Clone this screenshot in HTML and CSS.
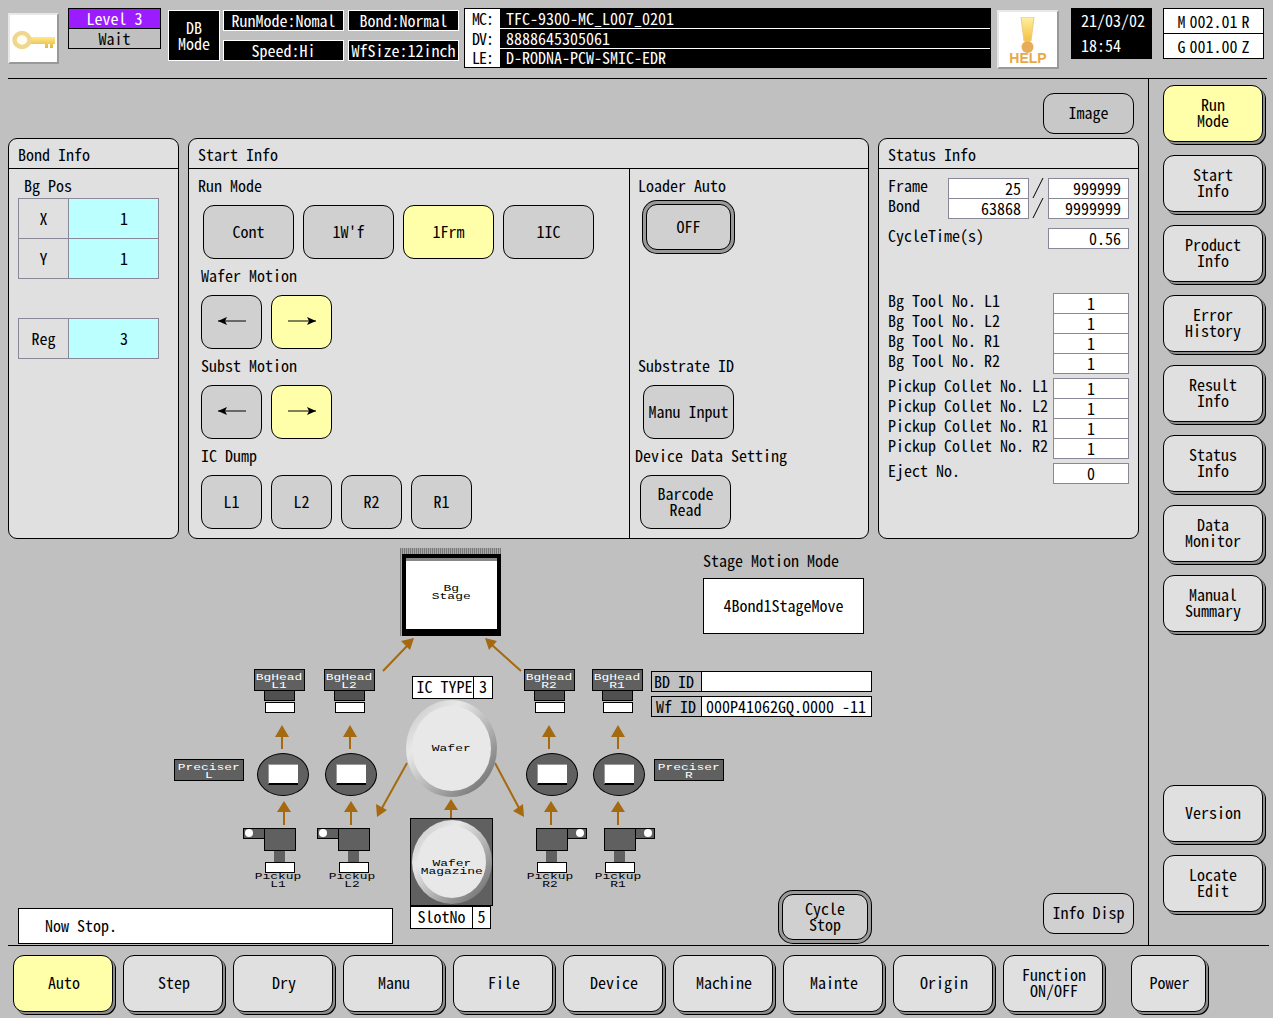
FILE: index.html
```html
<!DOCTYPE html>
<html lang="en">
<head>
  <meta charset="UTF-8" />
  <title>TFC-9300 Auto</title>
  <link rel="stylesheet" href="styles.css">
</head>
<body>
  <div class="screen">
    <header class="top">
      <div class="tile key-tile">
        <svg width="44" height="26" viewBox="0 0 44 26">
          <defs>
            <linearGradient id="gold" x1="0" y1="0" x2="0" y2="1">
              <stop offset="0" stop-color="#ffe98a"/>
              <stop offset="1" stop-color="#e3b63c"/>
            </linearGradient>
          </defs>
          <path d="M17 11h26v7h-2v4h-3v-4h-2v4h-3v-4h-16z" fill="url(#gold)"/>
          <ellipse cx="10" cy="14" rx="7.5" ry="7" fill="#fffdf0" stroke="#efd78f" stroke-width="4.5"/>
        </svg>
      </div>
      <div class="level">
        <div class="level-on">Level 3</div>
        <div class="level-off">Wait</div>
      </div>
      <div class="black-box db-mode">DB<br>Mode</div>
      <div class="mode-grid">
        <div class="black-box">RunMode:Nomal</div>
        <div class="black-box">Bond:Normal</div>
        <div class="black-box">Speed:Hi</div>
        <div class="black-box">WfSize:12inch</div>
      </div>
      <div class="names">
        <div class="name-row"><span class="name-key">MC:</span><span class="name-val">TFC-9300-MC_L007_0201</span></div>
        <div class="name-row"><span class="name-key">DV:</span><span class="name-val">8888645305061</span></div>
        <div class="name-row"><span class="name-key">LE:</span><span class="name-val">D-RODNA-PCW-SMIC-EDR</span></div>
      </div>
      <div class="tile help-tile">
        <svg width="22" height="36" viewBox="0 0 22 36">
          <defs>
            <linearGradient id="warn" x1="0" y1="0" x2="0" y2="1">
              <stop offset="0" stop-color="#fff0a0"/>
              <stop offset="1" stop-color="#f5c040"/>
            </linearGradient>
          </defs>
          <path d="M4 0h13l-3 24h-7z" fill="url(#warn)" stroke="#ecca80"/>
          <circle cx="10.5" cy="30" r="6" fill="#e8ac58"/>
        </svg>
        <span class="help-text">HELP</span>
      </div>
      <div class="clock">21/03/02<br>18:54</div>
      <div class="pos">
        <div class="pos-row">M 002.01 R</div>
        <div class="pos-row">G 001.00 Z</div>
      </div>
    </header>

    <div class="middle">
      <main class="work">
        <div class="image-row"><button class="btn flat wide">Image</button></div>

        <div class="panels">
          <section class="panel bond-panel">
            <h2>Bond Info</h2>
            <div class="bond-body">
              <div class="bg-pos">Bg Pos</div>
              <div class="pair"><span class="pair-key">X</span><span class="pair-val">1</span></div>
              <div class="pair"><span class="pair-key">Y</span><span class="pair-val">1</span></div>
              <div class="pair reg"><span class="pair-key">Reg</span><span class="pair-val">3</span></div>
            </div>
          </section>

          <section class="panel start-panel">
            <h2>Start Info</h2>
            <div class="start-body">
              <div class="start-left">
                <div class="label run-label">Run Mode</div>
                <div class="btn-row run-row">
                  <button class="btn flat wide">Cont</button>
                  <button class="btn flat wide">1W'f</button>
                  <button class="btn flat wide on">1Frm</button>
                  <button class="btn flat wide">1IC</button>
                </div>
                <div class="label">Wafer Motion</div>
                <div class="btn-row">
                  <button class="btn flat small"><svg width="30" height="12" viewBox="0 0 30 12"><path d="M1 6h28" stroke="#000"/><path d="M1 6l9-4-2 4 2 4z"/></svg></button>
                  <button class="btn flat small on"><svg width="30" height="12" viewBox="0 0 30 12"><path d="M1 6h28" stroke="#000"/><path d="M29 6l-9-4 2 4-2 4z"/></svg></button>
                </div>
                <div class="label">Subst Motion</div>
                <div class="btn-row">
                  <button class="btn flat small"><svg width="30" height="12" viewBox="0 0 30 12"><path d="M1 6h28" stroke="#000"/><path d="M1 6l9-4-2 4 2 4z"/></svg></button>
                  <button class="btn flat small on"><svg width="30" height="12" viewBox="0 0 30 12"><path d="M1 6h28" stroke="#000"/><path d="M29 6l-9-4 2 4-2 4z"/></svg></button>
                </div>
                <div class="label">IC Dump</div>
                <div class="btn-row">
                  <button class="btn flat small">L1</button>
                  <button class="btn flat small">L2</button>
                  <button class="btn flat small">R2</button>
                  <button class="btn flat small">R1</button>
                </div>
              </div>
              <div class="start-right">
                <div class="label">Loader Auto</div>
                <button class="btn flat ringed off-btn">OFF</button>
                <div class="label substrate">Substrate ID</div>
                <button class="btn flat wide manu-btn">Manu Input</button>
                <div class="label device">Device Data Setting</div>
                <button class="btn flat wide barcode-btn">Barcode<br>Read</button>
              </div>
            </div>
          </section>

          <section class="panel status-panel">
            <h2>Status Info</h2>
            <div class="status-body">
              <div class="stat">
                <span class="stat-name frame-name">Frame</span>
                <span class="num">25</span>
                <svg class="slash" width="19" height="20" viewBox="0 0 19 20"><path d="M4 20L14 0" stroke="#000" fill="none"/></svg>
                <span class="num">999999</span>
              </div>
              <div class="stat">
                <span class="stat-name frame-name">Bond</span>
                <span class="num">63868</span>
                <svg class="slash" width="19" height="20" viewBox="0 0 19 20"><path d="M4 20L14 0" stroke="#000" fill="none"/></svg>
                <span class="num">9999999</span>
              </div>
              <div class="stat cycle">
                <span class="stat-name">CycleTime(s)</span>
                <span class="num">0.56</span>
              </div>
              <div class="tools first-tools">
                <div class="stat"><span class="stat-name">Bg Tool No. L1</span><span class="num mid">1</span></div>
                <div class="stat"><span class="stat-name">Bg Tool No. L2</span><span class="num mid">1</span></div>
                <div class="stat"><span class="stat-name">Bg Tool No. R1</span><span class="num mid">1</span></div>
                <div class="stat"><span class="stat-name">Bg Tool No. R2</span><span class="num mid">1</span></div>
              </div>
              <div class="tools">
                <div class="stat"><span class="stat-name">Pickup Collet No. L1</span><span class="num mid">1</span></div>
                <div class="stat"><span class="stat-name">Pickup Collet No. L2</span><span class="num mid">1</span></div>
                <div class="stat"><span class="stat-name">Pickup Collet No. R1</span><span class="num mid">1</span></div>
                <div class="stat"><span class="stat-name">Pickup Collet No. R2</span><span class="num mid">1</span></div>
              </div>
              <div class="tools">
                <div class="stat"><span class="stat-name">Eject No.</span><span class="num mid">0</span></div>
              </div>
            </div>
          </section>
        </div>

        <!-- machine diagram, coordinates are relative to this canvas (top = y 540) -->
        <div class="canvas">
          <svg class="arrows" width="1148" height="405" viewBox="0 540 1148 405">
            <g stroke="#a5690f" stroke-width="2" fill="none">
              <path d="M282 749V734M350 749V734M549 749V734M618 749V734"/>
              <path d="M284 825V810M351 825V810M551 825V810M618 825V810M451 820V808"/>
              <path d="M383 671L407 646M521 671L492 645M407 763L382 808M495 763L519 808"/>
            </g>
            <g fill="#a5690f">
              <path d="M275 737l7-12 7 12zM343 737l7-12 7 12zM542 737l7-12 7 12zM611 737l7-12 7 12z"/>
              <path d="M277 812l7-11 7 11zM344 812l7-11 7 11zM544 812l7-11 7 11zM611 812l7-11 7 11zM444 810l7-11 7 11z"/>
              <path d="M414 638l-13 3 9 9zM485 638l4 12 8-9zM377 817l-1-13 11 6zM524 817l-11-6 10-7z"/>
            </g>
          </svg>

          <div class="stage">
            <div class="stage-face"><span class="tiny">Bg<br>Stage</span></div>
          </div>

          <div class="motion-label">Stage Motion Mode</div>
          <div class="motion-box">4Bond1StageMove</div>

          <div class="head head-l1"><div class="dark-label"><span class="tiny">BgHead<br>L1</span></div><div class="head-neck"></div><div class="white-foot"></div></div>
          <div class="head head-l2"><div class="dark-label"><span class="tiny">BgHead<br>L2</span></div><div class="head-neck"></div><div class="white-foot"></div></div>
          <div class="head head-r2"><div class="dark-label"><span class="tiny">BgHead<br>R2</span></div><div class="head-neck"></div><div class="white-foot"></div></div>
          <div class="head head-r1"><div class="dark-label"><span class="tiny">BgHead<br>R1</span></div><div class="head-neck"></div><div class="white-foot"></div></div>

          <div class="dark-label preciser preciser-l"><span class="tiny">Preciser<br>L</span></div>
          <div class="dark-label preciser preciser-r"><span class="tiny">Preciser<br>R</span></div>

          <div class="oval oval-l1"><div class="oval-face"></div></div>
          <div class="oval oval-l2"><div class="oval-face"></div></div>
          <div class="oval oval-r2"><div class="oval-face"></div></div>
          <div class="oval oval-r1"><div class="oval-face"></div></div>

          <div class="pickup pickup-l1"><div class="arm"></div><div class="body"></div><div class="stem"></div><div class="white-foot"></div><div class="pick-name"><span class="tiny">Pickup<br>L1</span></div></div>
          <div class="pickup pickup-l2"><div class="arm"></div><div class="body"></div><div class="stem"></div><div class="white-foot"></div><div class="pick-name"><span class="tiny">Pickup<br>L2</span></div></div>
          <div class="pickup right pickup-r2"><div class="arm"></div><div class="body"></div><div class="stem"></div><div class="white-foot"></div><div class="pick-name"><span class="tiny">Pickup<br>R2</span></div></div>
          <div class="pickup right pickup-r1"><div class="arm"></div><div class="body"></div><div class="stem"></div><div class="white-foot"></div><div class="pick-name"><span class="tiny">Pickup<br>R1</span></div></div>

          <div class="tag ic-type"><span class="tag-key">IC TYPE</span><span class="tag-val">3</span></div>
          <div class="disc wafer"><div class="disc-face"><span class="tiny">Wafer</span></div></div>
          <div class="magazine"></div>
          <div class="disc wafer-mag"><div class="disc-face"><span class="tiny">Wafer<br>Magazine</span></div></div>
          <div class="tag slot-no"><span class="tag-key">SlotNo</span><span class="tag-val">5</span></div>

          <div class="id-row bd-id"><span class="id-key">BD ID</span><span class="id-val"></span></div>
          <div class="id-row wf-id"><span class="id-key">Wf ID</span><span class="id-val">000P41062GQ.0000 -11</span></div>

          <div class="message">Now Stop.</div>
          <button class="btn flat ringed cycle-stop">Cycle<br>Stop</button>
          <button class="btn flat wide info-disp">Info Disp</button>
        </div>
      </main>

      <aside class="side">
        <button class="btn raised on">Run<br>Mode</button>
        <button class="btn raised">Start<br>Info</button>
        <button class="btn raised">Product<br>Info</button>
        <button class="btn raised">Error<br>History</button>
        <button class="btn raised">Result<br>Info</button>
        <button class="btn raised">Status<br>Info</button>
        <button class="btn raised">Data<br>Monitor</button>
        <button class="btn raised">Manual<br>Summary</button>
        <button class="btn raised version">Version</button>
        <button class="btn raised">Locate<br>Edit</button>
      </aside>
    </div>

    <footer class="bottom">
      <button class="btn raised on">Auto</button>
      <button class="btn raised">Step</button>
      <button class="btn raised">Dry</button>
      <button class="btn raised">Manu</button>
      <button class="btn raised">File</button>
      <button class="btn raised">Device</button>
      <button class="btn raised">Machine</button>
      <button class="btn raised">Mainte</button>
      <button class="btn raised">Origin</button>
      <button class="btn raised">Function<br>ON/OFF</button>
      <button class="btn raised power">Power</button>
    </footer>
  </div>
</body>
</html>
```

FILE: styles.css
```css
* {
  margin: 0;
  padding: 0;
  box-sizing: border-box;
}

body {
  background: #c0c0c0;
  color: #000;
  font-family: "Noto Sans CJK JP", "Liberation Mono", monospace;
  font-feature-settings: "hwid" 1;
  font-size: 16px;
  line-height: 16px;
}

.screen {
  width: 1273px;
  height: 1018px;
  overflow: hidden;
  display: flex;
  flex-direction: column;
}

/* ---- top bar ---- */
.top {
  height: 79px;
  margin: 0 6px 0 8px;
  border-bottom: 1px solid #000;
  display: flex;
  align-items: flex-start;
  white-space: nowrap;
}

.tile {
  background: #fff;
  border-top: 2px solid #e8e8e8;
  border-left: 2px solid #e8e8e8;
  border-right: 2px solid #999;
  border-bottom: 2px solid #999;
  display: flex;
  align-items: center;
  justify-content: center;
}

.key-tile {
  width: 51px;
  height: 51px;
  margin-top: 13px;
}

.level {
  width: 93px;
  height: 41px;
  margin: 8px 0 0 9px;
  border: 1px solid #000;
  text-align: center;
}

.level-on {
  height: 20px;
  line-height: 19px;
  background: #9b1cff;
  color: #fff;
  border-bottom: 1px solid #000;
}

.level-off {
  height: 19px;
  line-height: 18px;
}

.black-box {
  background: #000;
  color: #fff;
  border: 1px solid #fff;
  text-align: center;
  line-height: 18px;
}

.db-mode {
  width: 52px;
  height: 51px;
  margin: 10px 0 0 7px;
  padding-top: 8px;
  line-height: 16px;
}

.mode-grid {
  display: grid;
  grid-template-columns: 121px 111px;
  grid-template-rows: 21px 21px;
  column-gap: 4px;
  row-gap: 9px;
  margin: 10px 0 0 3px;
}

.names {
  width: 527px;
  height: 60px;
  margin: 8px 0 0 5px;
  border: 1px solid #000;
  background: #000;
}

.name-row {
  height: 20px;
  display: flex;
  line-height: 19px;
  border-bottom: 1px solid #fff;
}

.name-row:last-child {
  height: 18px;
  line-height: 17px;
  border-bottom: 0;
}

.name-key {
  width: 36px;
  background: #fff;
  color: #000;
  padding-left: 7px;
  border-right: 1px solid #000;
  letter-spacing: -1px;
}

.name-val {
  flex: 1;
  color: #fff;
  padding-left: 5px;
}

.help-tile {
  width: 62px;
  height: 59px;
  margin: 10px 0 0 6px;
  flex-direction: column;
  padding-top: 1px;
}

.help-text {
  font: bold 14px/12px "Liberation Sans", sans-serif;
  color: #e8a848;
  margin-top: -1px;
}

.clock {
  width: 81px;
  height: 51px;
  margin: 8px 0 0 12px;
  background: #000;
  color: #fff;
  padding: 0 0 0 10px;
  line-height: 25px;
  font-size: 16px;
}

.pos {
  width: 101px;
  height: 51px;
  margin: 8px 0 0 11px;
  background: #fff;
  border: 1px solid #000;
}

.pos-row {
  height: 25px;
  line-height: 25px;
  text-align: center;
  word-spacing: -4px;
}

.pos-row:first-child {
  border-bottom: 1px solid #000;
}

/* ---- buttons ---- */
.btn {
  font: inherit;
  font-feature-settings: inherit;
  color: #000;
  border: 1px solid #000;
  border-radius: 11px;
  background: #d0d0d0;
  display: flex;
  align-items: center;
  justify-content: center;
  text-align: center;
  flex: none;
  padding-bottom: 3px;
}

.btn.on {
  background: #ffffaa;
}

.btn.wide {
  width: 91px;
  height: 54px;
}

.btn.small {
  width: 61px;
  height: 54px;
}

.btn.ringed {
  box-shadow: 0 0 0 3px #999, 0 0 0 4px #000;
}

.btn.raised {
  width: 100px;
  height: 57px;
  background: #e0e0e0;
  box-shadow: 2px 2px 0 #8c8c8c, 3px 3px 0 #000;
}

.btn.raised.on {
  background: #ffffaa;
}

/* ---- middle ---- */
.middle {
  height: 867px;
  flex: none;
  display: flex;
  margin: 0 4px 0 8px;
  border-bottom: 1px solid #000;
}

.work {
  width: 1141px;
  flex: none;
  border-right: 1px solid #000;
  display: flex;
  flex-direction: column;
}

.image-row {
  height: 59px;
  padding: 14px 0 0 0;
  display: flex;
  justify-content: flex-end;
  margin-right: 14px;
}

.image-row .btn {
  height: 41px;
  background: #c8c8c8;
}

.panels {
  display: flex;
  gap: 9px;
  height: 401px;
  margin-bottom: 1px;
}

.panel {
  background: #e0e0e0;
  border: 1px solid #000;
  border-radius: 9px;
  display: flex;
  flex-direction: column;
  flex: none;
}

.panel h2 {
  font: inherit;
  font-feature-settings: inherit;
  height: 30px;
  padding: 7px 0 0 9px;
  border-bottom: 1px solid #000;
  flex: none;
}

.bond-panel {
  width: 171px;
}

.start-panel {
  width: 681px;
}

.status-panel {
  width: 261px;
}

.bond-body {
  padding: 9px 0 0 9px;
}

.bg-pos {
  height: 20px;
  padding-left: 6px;
  line-height: 14px;
}

.pair {
  width: 141px;
  height: 41px;
  margin-bottom: -1px;
  display: flex;
  border: 1px solid #889;
  line-height: 39px;
  text-align: center;
}

.pair-key {
  width: 50px;
  border-right: 1px solid #889;
}

.pair-val {
  flex: 1;
  background: #bbffff;
  padding-left: 21px;
}

.pair.reg {
  margin-top: 40px;
}

.start-body {
  display: flex;
  flex: 1;
}

.start-left {
  width: 441px;
  border-right: 1px solid #000;
  padding: 0 0 0 12px;
}

.label {
  height: 20px;
  margin-top: 7px;
  line-height: 18px;
}

.run-label {
  margin-left: -3px;
}

.btn-row {
  display: flex;
  gap: 9px;
  margin-top: 9px;
}

.run-row {
  margin-left: 2px;
}

.start-right {
  flex: 1;
  padding-left: 8px;
}

.off-btn {
  margin: 8px 0 0 8px;
  width: 85px;
  height: 46px;
}

.substrate {
  margin-top: 106px;
}

.manu-btn {
  margin: 9px 0 0 5px;
}

.device {
  margin-left: -3px;
}

.barcode-btn {
  margin: 9px 0 0 2px;
}

.status-body {
  padding: 9px 9px 0 9px;
}

.stat {
  height: 20px;
  display: flex;
  align-items: flex-start;
}

.stat-name {
  flex: 1;
  line-height: 14px;
  white-space: nowrap;
}

.frame-name {
  flex: none;
  width: 60px;
}

.num {
  width: 81px;
  height: 21px;
  flex: none;
  background: #fff;
  border: 1px solid #889;
  text-align: right;
  padding-right: 7px;
  line-height: 18px;
}

.num.mid {
  width: 76px;
  text-align: center;
  padding: 0;
}

.slash {
  flex: none;
}

.cycle {
  margin-top: 10px;
}

.tools {
  margin-top: 5px;
}

.first-tools {
  margin-top: 45px;
}

/* ---- machine diagram ---- */
.canvas {
  position: relative;
  flex: 1;
  margin-left: -8px;
}

.arrows {
  position: absolute;
  left: 0;
  top: 0;
}

.tiny {
  display: inline-block;
  font: 9.5px/8px "Liberation Mono", monospace;
  font-feature-settings: normal;
  transform: scaleX(1.36);
  white-space: nowrap;
}

.stage {
  position: absolute;
  left: 400px;
  top: 8px;
  width: 101px;
  height: 88px;
  padding: 6px 0 0 2px;
  background: repeating-linear-gradient(90deg, #777 0 1px, #aaa 1px 2px);
}

.stage-face {
  width: 99px;
  height: 82px;
  padding-bottom: 2px;
  border: 4px solid #000;
  border-bottom-width: 7px;
  background: #fff;
  box-shadow: inset 0 3px 0 #888;
  display: flex;
  align-items: center;
  justify-content: center;
  text-align: center;
}

.motion-label {
  position: absolute;
  left: 703px;
  top: 12px;
}

.motion-box {
  position: absolute;
  left: 703px;
  top: 38px;
  width: 161px;
  height: 56px;
  background: #fff;
  border: 1px solid #000;
  line-height: 52px;
  text-align: center;
}

.dark-label {
  background: #606060;
  color: #fff;
  border: 1px solid #000;
  text-align: center;
  padding-top: 3px;
}

.head {
  position: absolute;
  top: 129px;
  width: 51px;
}

.head .dark-label {
  height: 22px;
}

.head-neck {
  width: 31px;
  height: 10px;
  margin-left: 10px;
  background: #505050;
  border: 1px solid #000;
  border-top: 0;
}

.white-foot {
  width: 30px;
  height: 11px;
  margin: 1px 0 0 11px;
  background: #fff;
  border: 1px solid #000;
}

.head-l1 { left: 254px; }
.head-l2 { left: 324px; }
.head-r2 { left: 524px; }
.head-r1 { left: 592px; }

.preciser {
  position: absolute;
  top: 219px;
  width: 70px;
  height: 22px;
}

.preciser-l { left: 174px; }
.preciser-r { left: 654px; }

.oval {
  position: absolute;
  top: 213px;
  width: 52px;
  height: 43px;
  border-radius: 50%;
  background: #606060;
  border: 1px solid #000;
  padding: 10px 0 0 10px;
}

.oval-face {
  width: 30px;
  height: 21px;
  background: #fff;
  border-top: 1px solid #999;
  border-left: 1px solid #999;
  border-bottom: 2px solid #000;
}

.oval-l1 { left: 257px; }
.oval-l2 { left: 325px; }
.oval-r2 { left: 526px; }
.oval-r1 { left: 593px; }

.pickup {
  position: absolute;
  top: 288px;
  width: 32px;
}

.pickup .body {
  width: 32px;
  height: 23px;
  background: #606060;
  border: 1px solid #000;
}

.pickup .arm {
  position: absolute;
  left: -21px;
  top: 0;
  width: 21px;
  height: 11px;
  background: #606060;
  border: 1px solid #000;
  border-right: 0;
}

.pickup .arm::before {
  content: "";
  position: absolute;
  left: 1px;
  top: 0;
  width: 8px;
  height: 8px;
  border-radius: 50%;
  background: #fff;
}

.pickup.right .arm {
  left: 32px;
  width: 19px;
  border: 1px solid #000;
  border-left: 0;
}

.pickup.right .arm::before {
  left: auto;
  right: 2px;
}

.pickup .stem {
  width: 11px;
  height: 11px;
  margin-left: 10px;
  background: #606060;
}

.pickup .white-foot {
  margin: 0 0 0 1px;
}

.pick-name {
  width: 32px;
  margin: -1px 0 0 -3px;
  text-align: center;
}

.pickup-l1 { left: 264px; }
.pickup-l2 { left: 338px; }
.pickup-r2 { left: 536px; }
.pickup-r1 { left: 604px; }

.tag {
  position: absolute;
  height: 23px;
  display: flex;
  background: #fff;
  border: 1px solid #000;
  line-height: 19px;
  text-align: center;
  white-space: nowrap;
}

.tag-val {
  flex: 1;
  border-left: 1px solid #000;
}

.ic-type {
  left: 412px;
  top: 136px;
  width: 81px;
}

.ic-type .tag-key {
  width: 60px;
  padding-left: 3px;
}

.slot-no {
  left: 410px;
  top: 366px;
  width: 81px;
}

.slot-no .tag-key {
  width: 61px;
}

.disc {
  position: absolute;
  border-radius: 50%;
  padding: 6px;
  background: linear-gradient(135deg, #c0c0c0 0%, #e8e8e8 30%, #b0b0b0 60%, #606060 100%);
  display: flex;
}

.disc-face {
  flex: 1;
  border-radius: 50%;
  background: #e8e8e8;
  display: flex;
  align-items: center;
  justify-content: center;
  text-align: center;
}

.wafer {
  left: 406px;
  top: 160px;
  width: 91px;
  height: 97px;
}

.magazine {
  position: absolute;
  left: 410px;
  top: 278px;
  width: 83px;
  height: 88px;
  background: #606060;
  border: 1px solid #000;
}

.wafer-mag {
  left: 412px;
  top: 280px;
  width: 80px;
  height: 84px;
}

.wafer-mag .disc-face {
  padding-top: 12px;
}

.id-row {
  position: absolute;
  left: 651px;
  width: 221px;
  height: 21px;
  display: flex;
  border: 1px solid #000;
  line-height: 19px;
  white-space: nowrap;
}

.bd-id { top: 131px; }
.wf-id { top: 156px; }

.id-key {
  width: 50px;
  padding-left: 2px;
  border-right: 1px solid #000;
}

.wf-id .id-key {
  padding-left: 4px;
}

.id-val {
  flex: 1;
  background: #fff;
  padding-left: 4px;
}

.message {
  position: absolute;
  left: 18px;
  top: 368px;
  width: 375px;
  height: 36px;
  background: #fff;
  border: 1px solid #000;
  padding-left: 26px;
  line-height: 33px;
}

.cycle-stop {
  position: absolute;
  left: 782px;
  top: 354px;
  width: 86px;
  height: 46px;
}

.btn.info-disp {
  position: absolute;
  left: 1043px;
  top: 353px;
  height: 41px;
}

/* ---- side and bottom button columns ---- */
.side {
  flex: 1;
  padding: 6px 0 0 14px;
  display: flex;
  flex-direction: column;
  gap: 13px;
}

.side .version {
  margin-top: 140px;
}

.bottom {
  height: 72px;
  display: flex;
  gap: 10px;
  padding: 9px 0 0 13px;
}

.bottom .btn {
  padding-left: 2px;
}

.bottom .power {
  width: 75px;
  margin-left: 18px;
}
```
